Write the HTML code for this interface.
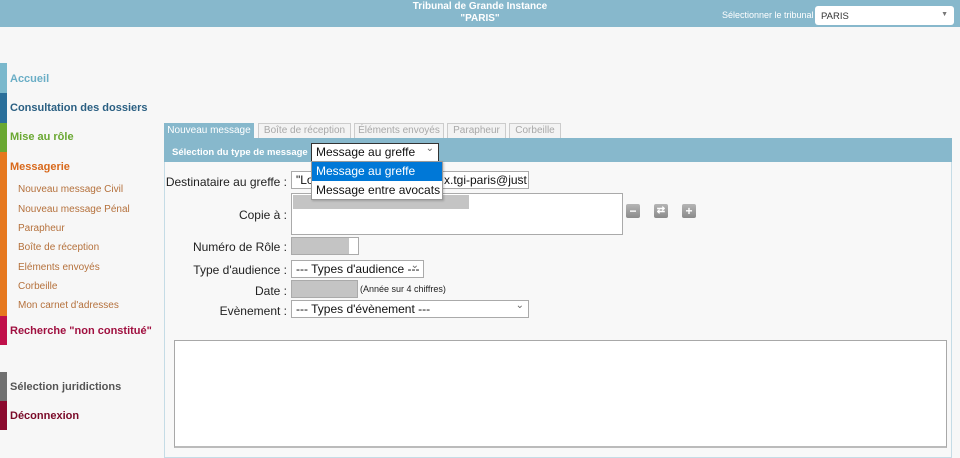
<!DOCTYPE html>
<html><head><meta charset="utf-8"><style>
*{box-sizing:border-box;margin:0;padding:0}
body{width:960px;height:453px;overflow:hidden;background:#f7f7f7;font-family:"Liberation Sans",sans-serif;position:relative}
.a{position:absolute}
.hdr{left:0;top:0;width:960px;height:27px;background:#87b8cc}
.nav{left:0;width:7px}
.nt{left:10px;font-size:11px;font-weight:bold;white-space:nowrap}
.sub{left:18px;font-size:10px;color:#b5713c;white-space:nowrap}
.tab{top:123px;height:15px;border:1px solid #ccc;border-bottom:none;background:#f3f3f3;color:#a8a8a8;font-size:10px;text-align:center;line-height:14px}
.lbl{font-size:12px;color:#222;text-align:right;width:130px;left:157px}
.sel{background:#fff;border:1px solid #aaa;font-size:12px;color:#111;padding-left:4px;line-height:16px;white-space:nowrap;overflow:hidden}
.sel:after{content:"⌄";position:absolute;right:4px;top:-3px;font-size:10px;color:#666}
.ic{width:14px;height:14px;border-radius:2px;background:linear-gradient(#b5b5b5,#8a8a8a);color:#fff;font-size:12px;font-weight:bold;text-align:center;line-height:14px}
</style></head><body>
<div class="a hdr"></div>
<div class="a" style="left:380px;top:1px;width:200px;text-align:center;color:#fff;font-size:10px;font-weight:bold;line-height:12px">Tribunal de Grande Instance<br>"PARIS"</div>
<div class="a" style="left:722px;top:10px;color:#fff;font-size:9px">Sélectionner le tribunal :</div>
<div class="a" style="left:815px;top:6px;width:139px;height:19px;background:#fff;border-radius:3px;font-size:9.5px;color:#333;padding:5px 6px">PARIS<span style="position:absolute;right:6px;top:5px;font-size:7px;color:#777">▼</span></div>

<div class="a nav" style="top:63px;height:30px;background:#7ab8cc"></div>
<div class="a nav" style="top:93px;height:30px;background:#2a6f9a"></div>
<div class="a nav" style="top:123px;height:29px;background:#6aa832"></div>
<div class="a nav" style="top:152px;height:164px;background:#e6781e"></div>
<div class="a nav" style="top:316px;height:29px;background:#c0104a"></div>
<div class="a nav" style="top:372px;height:29px;background:#707070"></div>
<div class="a nav" style="top:401px;height:29px;background:#8b0a2e"></div>
<div class="a nt" style="top:73px;color:#6aaec6">Accueil</div>
<div class="a nt" style="top:102px;color:#2a5f82">Consultation des dossiers</div>
<div class="a nt" style="top:131px;color:#6aa832">Mise au rôle</div>
<div class="a nt" style="top:161px;color:#d8691c">Messagerie</div>
<div class="a sub" style="top:184px">Nouveau message Civil</div>
<div class="a sub" style="top:204px">Nouveau message Pénal</div>
<div class="a sub" style="top:223px">Parapheur</div>
<div class="a sub" style="top:242px">Boîte de réception</div>
<div class="a sub" style="top:262px">Eléments envoyés</div>
<div class="a sub" style="top:281px">Corbeille</div>
<div class="a sub" style="top:300px">Mon carnet d'adresses</div>
<div class="a nt" style="top:325px;color:#a01040">Recherche "non constitué"</div>
<div class="a nt" style="top:381px;color:#555">Sélection juridictions</div>
<div class="a nt" style="top:410px;color:#7a0a28">Déconnexion</div>

<div class="a" style="left:164px;top:138px;width:788px;height:320px;border:1px solid #c5dce6;background:#f8f8f8"></div>
<div class="a" style="left:164px;top:138px;width:788px;height:24px;background:#87b8cc"></div>
<div class="a tab" style="left:164px;width:90px;background:#87b8cc;border-color:#87b8cc;color:#fff">Nouveau message</div>
<div class="a tab" style="left:258px;width:93px">Boîte de réception</div>
<div class="a tab" style="left:354px;width:90px">Éléments envoyés</div>
<div class="a tab" style="left:447px;width:59px">Parapheur</div>
<div class="a tab" style="left:509px;width:52px">Corbeille</div>
<div class="a" style="left:172px;top:147px;color:#fff;font-size:9.5px;font-weight:bold">Sélection du type de message</div>
<div class="a sel" style="left:311px;top:143px;width:128px;height:19px;border-color:#333">Message au greffe</div>

<div class="a lbl" style="top:175px">Destinataire au greffe :</div>
<div class="a sel" style="left:291px;top:171px;width:238px;height:18px">"Lo<span style="position:absolute;left:152px">x.tgi-paris@just</span></div>
<div class="a lbl" style="top:208px">Copie à :</div>
<div class="a" style="left:291px;top:193px;width:332px;height:42px;background:#fff;border:1px solid #aaa"></div>
<div class="a" style="left:293px;top:195px;width:176px;height:14px;background:#c4c4c4"></div>
<div class="a ic" style="left:626px;top:204px">−</div>
<div class="a ic" style="left:654px;top:204px;font-size:10px">⇄</div>
<div class="a ic" style="left:682px;top:204px">+</div>
<div class="a lbl" style="top:240px">Numéro de Rôle :</div>
<div class="a" style="left:291px;top:237px;width:68px;height:18px;background:#fff;border:1px solid #aaa"></div>
<div class="a" style="left:292px;top:238px;width:57px;height:16px;background:#c4c4c4"></div>
<div class="a lbl" style="top:263px">Type d'audience :</div>
<div class="a sel" style="left:291px;top:260px;width:133px;height:18px">--- Types d'audience ---</div>
<div class="a lbl" style="top:284px">Date :</div>
<div class="a" style="left:291px;top:280px;width:67px;height:18px;background:#c4c4c4;border:1px solid #aaa"></div>
<div class="a" style="left:360px;top:284px;font-size:9px;color:#222">(Année sur 4 chiffres)</div>
<div class="a lbl" style="top:304px">Evènement :</div>
<div class="a sel" style="left:291px;top:300px;width:238px;height:18px">--- Types d'évènement ---</div>

<div class="a" style="left:174px;top:340px;width:773px;height:108px;background:#fff;border:1px solid #a8a8a8;border-bottom:2px solid #bbb"></div>

<div class="a" style="left:311px;top:161px;width:132px;height:39px;background:#fff;border:1px solid #999;box-shadow:1px 1px 2px rgba(0,0,0,.2)">
<div style="height:19px;background:#0078d7;color:#fff;font-size:12px;line-height:19px;padding-left:4px">Message au greffe</div>
<div style="height:19px;color:#111;font-size:12px;line-height:19px;padding-left:4px">Message entre avocats</div>
</div>
</body></html>
